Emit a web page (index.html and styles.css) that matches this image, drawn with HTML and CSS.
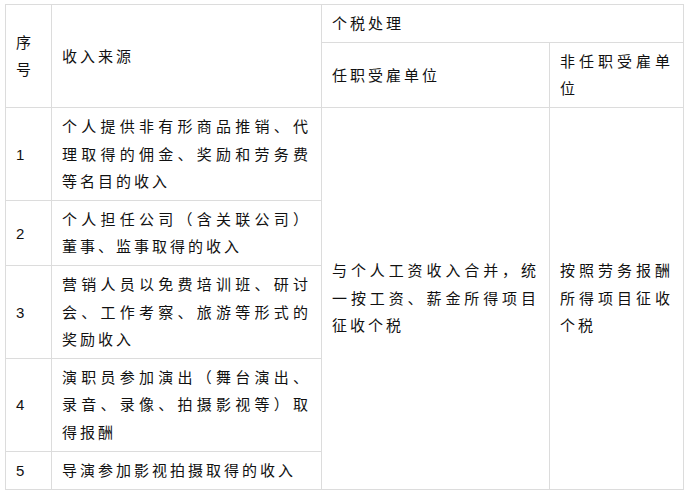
FILE: index.html
```html
<!DOCTYPE html>
<html lang="zh-CN">
<head>
    <meta charset="UTF-8">
    <meta name="viewport" content="width=device-width, initial-scale=1.0">
    <title>个税处理</title>
    <link rel="stylesheet" href="styles.css">
</head>
<body>
    <table class="tax-table">
        <colgroup>
            <col class="col-no">
            <col class="col-src">
            <col class="col-emp">
            <col class="col-other">
        </colgroup>
        <thead>
            <tr>
                <th rowspan="2">序号</th>
                <th rowspan="2">收入来源</th>
                <th colspan="2">个税处理</th>
            </tr>
            <tr>
                <th>任职受雇单位</th>
                <th>非任职受雇单位</th>
            </tr>
        </thead>
        <tbody>
            <tr>
                <td>1</td>
                <td>个人提供非有形商品推销、代理取得的佣金、奖励和劳务费等名目的收入</td>
                <td rowspan="5">与个人工资收入合并，统一按工资、薪金所得项目征收个税</td>
                <td rowspan="5">按照劳务报酬所得项目征收个税</td>
            </tr>
            <tr>
                <td>2</td>
                <td>个人担任公司（含关联公司）董事、监事取得的收入</td>
            </tr>
            <tr>
                <td>3</td>
                <td>营销人员以免费培训班、研讨会、工作考察、旅游等形式的奖励收入</td>
            </tr>
            <tr>
                <td>4</td>
                <td>演职员参加演出（舞台演出、录音、录像、拍摄影视等）取得报酬</td>
            </tr>
            <tr>
                <td>5</td>
                <td>导演参加影视拍摄取得的收入</td>
            </tr>
        </tbody>
    </table>
</body>
</html>
```

FILE: styles.css
```css
body {
    margin: 0;
    background: #fff;
    font-family: "Liberation Sans", "Noto Sans CJK SC", sans-serif;
    color: #111;
}
.tax-table {
    margin: 4px 0 0 5px;
    border-collapse: collapse;
    table-layout: fixed;
    width: 678px;
}
.col-no { width: 46px; }
.col-src { width: 270px; }
.col-emp { width: 228px; }
.col-other { width: 134px; }
th, td {
    border: 1px solid #dcdcdc;
    padding: 5px 10px 4.3px;
    font-size: 15px;
    font-weight: normal;
    line-height: 27.5px;
    letter-spacing: 3px;
    text-align: justify;
    vertical-align: middle;
}
```
